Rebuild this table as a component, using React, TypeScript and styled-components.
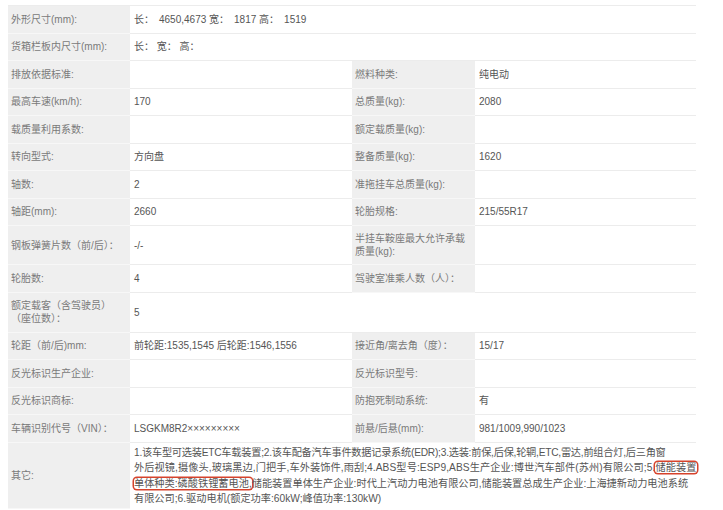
import React from 'react';
import styled, { createGlobalStyle } from 'styled-components';

const GlobalStyle = createGlobalStyle`
  body {
    margin: 0;
    background: #ffffff;
  }
`;

const Page = styled.div`
  padding: 5px 0 0 8px;
  width: 723px;
  height: 510px;
  box-sizing: border-box;
  overflow: hidden;
`;

const Table = styled.table`
  width: 688px;
  table-layout: fixed;
  border-collapse: separate;
  border-spacing: 0;
  border-top: 1px solid #ececec;
  font-family: 'Liberation Sans', 'Noto Sans CJK SC', sans-serif;
  font-size: 10px;
`;

const Label = styled.th<{ $h?: number }>`
  height: ${(p) => p.$h ?? 26.5}px;
  padding: 0 3px;
  background: #efefef;
  color: #7a7a7a;
  font-weight: normal;
  text-align: left;
  line-height: 13px;
  border-bottom: 1px solid #f7f7f7;
`;

const Value = styled.td`
  padding: 0 4px;
  color: #555555;
  line-height: 13px;
  border-bottom: 1px solid #ececec;
`;

const Notes = styled.td`
  padding: 2px 0 2px 4px;
  color: #555555;
  font-size: 10.2px;
  line-height: 15.5px;
`;

const Line = styled.div<{ $track?: number }>`
  white-space: nowrap;
  letter-spacing: ${(p) => p.$track ?? 0}px;
`;

const Marked = styled.span`
  border-radius: 3px;
  box-shadow: 0 0 0 1.5px #d6432c;
`;

type Row = {
  label: React.ReactNode;
  value: React.ReactNode;
  label2?: React.ReactNode;
  value2?: React.ReactNode;
  h?: number;
};

const rows: Row[] = [
  { label: '外形尺寸(mm):', value: '长：\u20024650,4673 宽：\u20021817 高：\u20021519' },
  { label: '货箱栏板内尺寸(mm):', value: '长： 宽： 高：' },
  { label: '排放依据标准:', value: '', label2: '燃料种类:', value2: '纯电动' },
  { label: '最高车速(km/h):', value: '170', label2: '总质量(kg):', value2: '2080' },
  { label: '载质量利用系数:', value: '', label2: '额定载质量(kg):', value2: '' },
  { label: '转向型式:', value: '方向盘', label2: '整备质量(kg):', value2: '1620' },
  { label: '轴数:', value: '2', label2: '准拖挂车总质量(kg):', value2: '' },
  { label: '轴距(mm):', value: '2660', label2: '轮胎规格:', value2: '215/55R17' },
  {
    label: '钢板弹簧片数（前/后）：',
    value: '-/-',
    label2: (
      <>
        半挂车鞍座最大允许承载
        <br />
        质量(kg):
      </>
    ),
    value2: '',
    h: 38,
  },
  { label: '轮胎数:', value: '4', label2: '驾驶室准乘人数（人）：', value2: '' },
  {
    label: (
      <>
        额定载客（含驾驶员）
        <br />
        （座位数）：
      </>
    ),
    value: '5',
    h: 39,
  },
  {
    label: '轮距（前/后)mm:',
    value: '前轮距:1535,1545 后轮距:1546,1556',
    label2: '接近角/离去角（度）：',
    value2: '15/17',
  },
  { label: '反光标识生产企业:', value: '', label2: '反光标识型号:', value2: '' },
  { label: '反光标识商标:', value: '', label2: '防抱死制动系统:', value2: '有' },
  {
    label: '车辆识别代号（VIN）：',
    value: 'LSGKM8R2×××××××××',
    label2: '前悬/后悬(mm):',
    value2: '981/1009,990/1023',
  },
];

const App = () => {
  return (
    <>
      <GlobalStyle />
      <Page>
        <Table>
          <colgroup>
            <col style={{ width: 122 }} />
            <col style={{ width: 222 }} />
            <col style={{ width: 123 }} />
            <col style={{ width: 221 }} />
          </colgroup>
          <tbody>
            {rows.map((row, i) => (
              <tr key={i}>
                <Label $h={row.h}>{row.label}</Label>
                {row.label2 === undefined ? (
                  <Value colSpan={3}>{row.value}</Value>
                ) : (
                  <>
                    <Value>{row.value}</Value>
                    <Label $h={row.h}>{row.label2}</Label>
                    <Value>{row.value2}</Value>
                  </>
                )}
              </tr>
            ))}
            <tr>
              <Label>其它:</Label>
              <Notes colSpan={3}>
                <Line $track={-0.24}>
                  1.该车型可选装ETC车载装置;2.该车配备汽车事件数据记录系统(EDR);3.选装:前保,后保,轮辋,ETC,雷达,前组合灯,后三角窗
                </Line>
                <Line $track={0.08}>
                  外后视镜,摄像头,玻璃黑边,门把手,车外装饰件,雨刮;4.ABS型号:ESP9,ABS生产企业:博世汽车部件(苏州)有限公司;5.
                  <Marked>储能装置</Marked>
                </Line>
                <Line>
                  <Marked>单体种类:磷酸铁锂蓄电池,</Marked>
                  储能装置单体生产企业:时代上汽动力电池有限公司,储能装置总成生产企业:上海捷新动力电池系统
                </Line>
                <Line>有限公司;6.驱动电机(额定功率:60kW;峰值功率:130kW)</Line>
              </Notes>
            </tr>
          </tbody>
        </Table>
      </Page>
    </>
  );
};

export default App;
